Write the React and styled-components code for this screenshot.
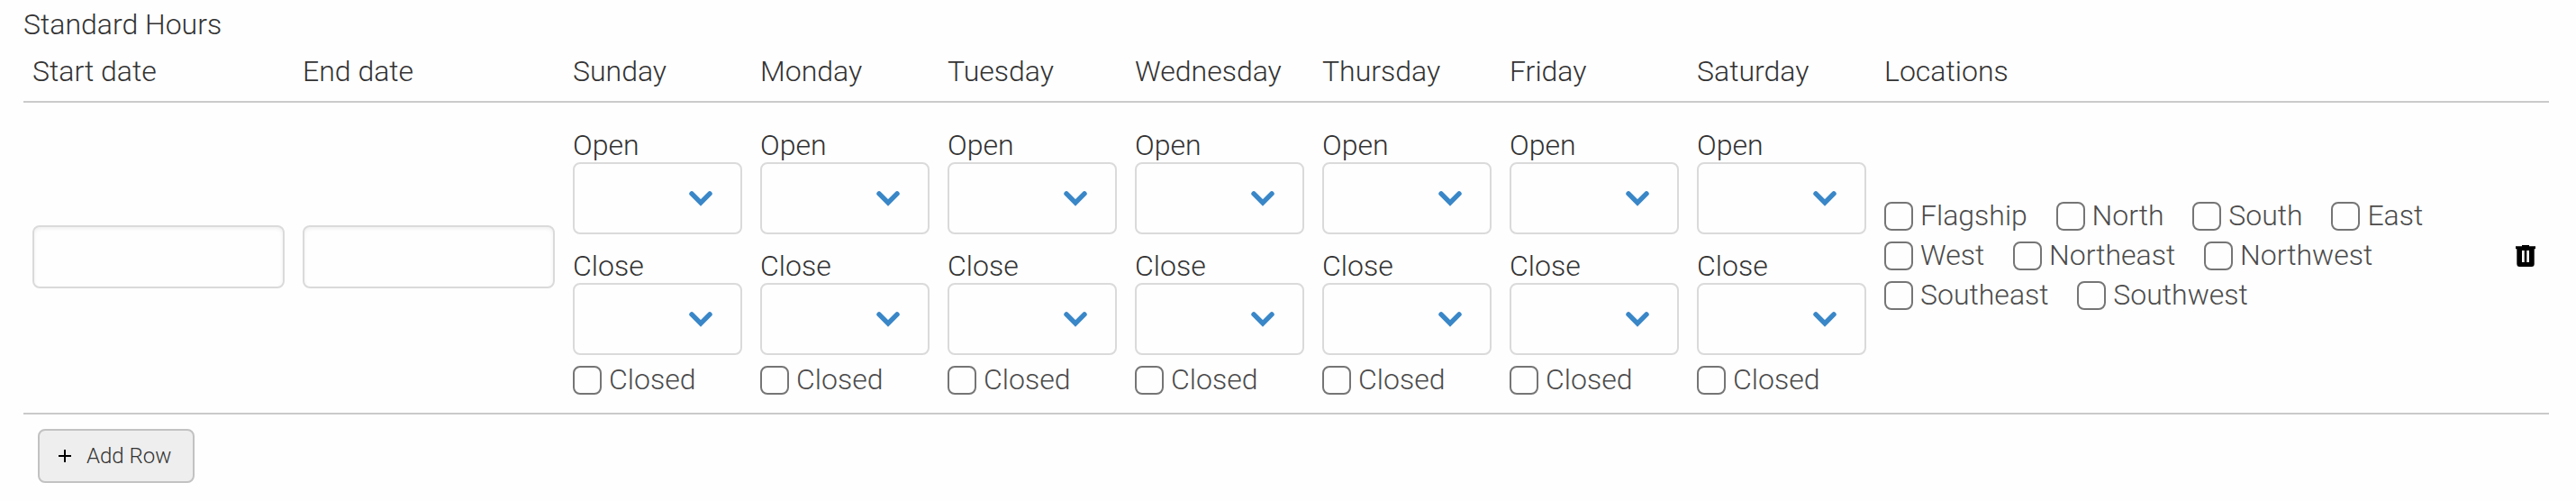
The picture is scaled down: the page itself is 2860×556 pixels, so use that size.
import React from "react";
import styled, { createGlobalStyle } from "styled-components";

const GlobalStyle = createGlobalStyle`
  * {
    box-sizing: border-box;
  }
  body {
    margin: 0;
    background-color: #fefefe;
    color: #333333;
    font-family: Roboto, "Liberation Sans", sans-serif;
    font-size: 32px;
    font-weight: 300;
    line-height: 44px;
  }
`;

const Page = styled.main`
  height: 556px;
  padding: 5px 30px 0 26px;
`;

const Title = styled.div`
  height: 52px;
`;

const Row = styled.div`
  display: grid;
  grid-template-columns: 280px 280px repeat(7, 188px) 620px 1fr;
  column-gap: 20px;
  padding: 0 10px;
  border-bottom: 2px solid #cacaca;
`;

const HeaderRow = styled(Row)`
  height: 57px;
`;

const BodyRow = styled(Row)`
  height: 346px;
  align-items: center;
`;

const DateInput = styled.input`
  width: 100%;
  height: 70px;
  margin: 0 0 2px;
  padding: 0 16px;
  border: 2px solid #dadada;
  border-radius: 8px;
  background-color: #fefefe;
  box-shadow: inset 0 2px 4px rgba(10, 10, 10, 0.06);
  font: inherit;
`;

const Day = styled.div`
  align-self: start;
  padding-top: 25px;
`;

const Field = styled.div`
  margin-bottom: 13px;
`;

const FieldLabel = styled.div`
  height: 41px;
`;

const Select = styled.button`
  display: flex;
  align-items: center;
  justify-content: flex-end;
  width: 100%;
  height: 80px;
  padding: 2px 31px 0 16px;
  border: 2px solid #dadada;
  border-radius: 8px;
  background-color: #fefefe;
`;

const CheckLabel = styled.label`
  display: flex;
  align-items: center;
  height: 44px;
  gap: 8px;
  color: #4c4c4c;
`;

const CheckText = styled.span`
  padding-bottom: 2px;
`;

const Checkbox = styled.input`
  appearance: none;
  width: 32px;
  height: 32px;
  margin: 0;
  border: 2px solid #757575;
  border-radius: 8px;
  background-color: #fefefe;
`;

const ClosedCheck = styled.div`
  margin-top: -7px;
`;

const Locations = styled.div`
  display: flex;
  flex-wrap: wrap;
  column-gap: 31.7px;
  margin-bottom: 4px;
`;

const DeleteButton = styled.button`
  display: flex;
  justify-self: end;
  margin: 0 5px 4px 0;
  padding: 0;
  border: 0;
  background: none;
`;

const AddButton = styled.button`
  display: flex;
  align-items: center;
  width: 174px;
  height: 60px;
  margin: 16px 0 0 16px;
  padding: 0 0 0 21px;
  gap: 17px;
  border: 2px solid #c2c2c2;
  border-radius: 8px;
  background-color: #eeeeee;
  color: #333333;
  font: inherit;
  font-size: 24px;
`;

const days = [
  "Sunday",
  "Monday",
  "Tuesday",
  "Wednesday",
  "Thursday",
  "Friday",
  "Saturday",
];

const locations = [
  "Flagship",
  "North",
  "South",
  "East",
  "West",
  "Northeast",
  "Northwest",
  "Southeast",
  "Southwest",
];

const Chevron = () => (
  <svg width="26" height="18" viewBox="0 0 26 18" fill="none">
    <path
      d="M3 2.900 13 13 23 2.900"
      stroke="#3a87c8"
      strokeWidth="5.4"
      strokeLinecap="round"
      strokeLinejoin="miter"
    />
  </svg>
);

const TrashIcon = () => (
  <svg width="22" height="24" viewBox="0 0 22 24">
    <path
      fillRule="evenodd"
      d="M7 0h8v1.3h7v2.9h-1.3V21a3 3 0 0 1-3 3H4.300a3 3 0 0 1-3-3V4.200H0V1.300h7zM7 6v13h2.700V6zm5.300 0v13H15V6z"
    />
  </svg>
);

const PlusIcon = () => (
  <svg width="14" height="14" viewBox="0 0 14 14">
    <path d="M6 0h2v6h6v2H8v6H6V8H0V6h6z" />
  </svg>
);

const TimeField = ({ label }) => (
  <Field>
    <FieldLabel>{label}</FieldLabel>
    <Select aria-label={label}>
      <Chevron />
    </Select>
  </Field>
);

const Check = ({ label }) => (
  <CheckLabel>
    <Checkbox type="checkbox" />
    <CheckText>{label}</CheckText>
  </CheckLabel>
);

export const StandardHours = () => {
  return (
    <Page>
      <Title>Standard Hours</Title>
      <HeaderRow>
        <div>Start date</div>
        <div>End date</div>
        {days.map((day) => (
          <div key={day}>{day}</div>
        ))}
        <div>Locations</div>
      </HeaderRow>
      <BodyRow>
        <DateInput aria-label="Start date" />
        <DateInput aria-label="End date" />
        {days.map((day) => (
          <Day key={day}>
            <TimeField label="Open" />
            <TimeField label="Close" />
            <ClosedCheck>
              <Check label="Closed" />
            </ClosedCheck>
          </Day>
        ))}
        <Locations>
          {locations.map((location) => (
            <Check key={location} label={location} />
          ))}
        </Locations>
        <DeleteButton aria-label="Delete row">
          <TrashIcon />
        </DeleteButton>
      </BodyRow>
      <AddButton>
        <PlusIcon />
        Add Row
      </AddButton>
    </Page>
  );
};

const App = () => (
  <>
    <GlobalStyle />
    <StandardHours />
  </>
);

export default App;
